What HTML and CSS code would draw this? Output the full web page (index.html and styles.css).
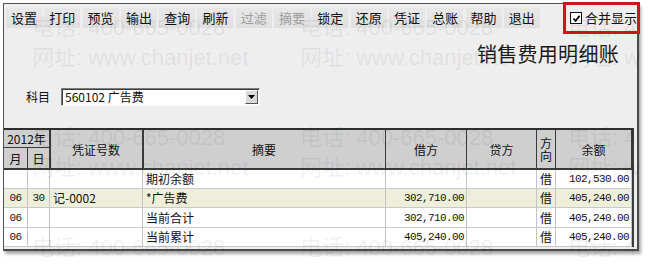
FILE: index.html
```html
<!DOCTYPE html>
<html lang="zh-CN">
<head>
<meta charset="utf-8">
<title>销售费用明细账</title>
<link rel="stylesheet" href="styles.css">
</head>
<body>
<div class="panel">
  <div class="toolbar">
    <span class="tb">设置</span>
    <span class="tb">打印</span>
    <span class="tb">预览</span>
    <span class="tb">输出</span>
    <span class="tb">查询</span>
    <span class="tb">刷新</span>
    <span class="tb disabled">过滤</span>
    <span class="tb disabled">摘要</span>
    <span class="tb">锁定</span>
    <span class="tb">还原</span>
    <span class="tb">凭证</span>
    <span class="tb">总账</span>
    <span class="tb">帮助</span>
    <span class="tb">退出</span>
  </div>
  <div class="title-row"><h1 class="title">销售费用明细账</h1></div>
  <div class="subject-row">
    <span class="subject-label">科目</span>
    <div class="select">
      <span class="select-text">560102 广告费</span>
      <span class="select-btn"><svg width="7" height="4" viewBox="0 0 7 4"><path d="M0 0H7L3.5 4Z" fill="#000"/></svg></span>
    </div>
  </div>
  <div class="ledger">
    <div class="h h-year">2012年</div>
    <div class="h h-voucher thick-l">凭证号数</div>
    <div class="h h-summary thick-l">摘要</div>
    <div class="h h-debit">借方</div>
    <div class="h h-credit">贷方</div>
    <div class="h h-dir">方<br>向</div>
    <div class="h h-bal">余额</div>
    <div class="h h-month">月</div>
    <div class="h h-day">日</div>

    <div class="c"></div><div class="c"></div><div class="c"></div>
    <div class="c txt">期初余额</div><div class="c"></div><div class="c"></div>
    <div class="c dir">借</div><div class="c num">102,530.00</div>

    <div class="c hl dt">06</div><div class="c hl dt">30</div><div class="c hl txt">记-0002</div>
    <div class="c hl txt">*广告费</div><div class="c hl num">302,710.00</div><div class="c hl"></div>
    <div class="c hl dir">借</div><div class="c hl num">405,240.00</div>

    <div class="c dt tall">06</div><div class="c tall"></div><div class="c tall"></div>
    <div class="c txt tall">当前合计</div><div class="c num tall">302,710.00</div><div class="c tall"></div>
    <div class="c dir tall">借</div><div class="c num tall">405,240.00</div>

    <div class="c dt">06</div><div class="c"></div><div class="c"></div>
    <div class="c txt">当前累计</div><div class="c num">405,240.00</div><div class="c"></div>
    <div class="c dir">借</div><div class="c num">405,240.00</div>
  </div>
</div>

<div class="merge-box">
  <span class="checkbox"><svg width="9" height="9" viewBox="0 0 9 9"><path d="M1.5 4.5L3.6 6.8L7.6 1.8" fill="none" stroke="#000" stroke-width="1.8"/></svg></span>
  <span class="merge-label">合并显示</span>
</div>

<div class="watermarks" aria-hidden="true">
  <span class="wm" style="left:32px;top:15px">电话: 400-665-0028</span>
  <span class="wm" style="left:300px;top:15px">电话: 400-665-0028</span>
  <span class="wm" style="left:568px;top:15px">电话: 4</span>
  <span class="wm" style="left:32px;top:45px">网址: www.chanjet.net</span>
  <span class="wm" style="left:300px;top:45px">网址: www.chanjet.net</span>
  <span class="wm" style="left:568px;top:45px">网址: w</span>
  <span class="wm" style="left:32px;top:125px">电话: 400-665-0028</span>
  <span class="wm" style="left:300px;top:125px">电话: 400-665-0028</span>
  <span class="wm" style="left:568px;top:125px">电话: 4</span>
  <span class="wm" style="left:32px;top:155px">网址: www.chanjet.net</span>
  <span class="wm" style="left:300px;top:155px">网址: www.chanjet.net</span>
  <span class="wm" style="left:568px;top:155px">网址: w</span>
  <span class="wm" style="left:32px;top:235px">电话: 400-665-0028</span>
  <span class="wm" style="left:300px;top:235px">电话: 400-665-0028</span>
  <span class="wm" style="left:568px;top:235px">电话: 4</span>
</div>
</body>
</html>
```

FILE: styles.css
```css
* { box-sizing: border-box; }

body {
  margin: 0;
  width: 648px;
  height: 264px;
  background: #ffffff;
  font-family: "Noto Sans CJK SC", "Liberation Sans", sans-serif;
  font-size: 12px;
  color: #111;
  position: relative;
  overflow: hidden;
}

.panel {
  margin: 3px 0 0 3px;
  width: 636px;
  height: 248px;
  border-top: 1px solid #555;
  border-left: 1px solid #555;
  border-right: 2px solid #4a4a4a;
  border-bottom: 2px solid #4a4a4a;
  background: #eeeeee;
  box-shadow: 2px 3px 3px rgba(0, 0, 0, 0.35);
  display: flex;
  flex-direction: column;
}

/* toolbar */
.toolbar {
  height: 28px;
  display: flex;
  align-items: center;
  gap: 2.3px;
  padding-left: 2px;
}

.tb {
  width: 36px;
  height: 20px;
  line-height: 20px;
  text-align: center;
  font-size: 13px;
  background: linear-gradient(#e8e8e8, #e0e0e0);
  color: #111;
}

.tb.disabled { color: #9c9c9c; }

/* title */
.title-row {
  margin-top: 10px;
  height: 24px;
  display: flex;
  justify-content: flex-end;
  padding-right: 18px;
}

.title {
  margin: 0;
  font-size: 20px;
  line-height: 24px;
  font-weight: normal;
  letter-spacing: 0.3px;
  color: #1a1a1a;
}

/* subject select */
.subject-row {
  margin-top: 22px;
  height: 18px;
  display: flex;
  align-items: center;
  padding-left: 22px;
}

.subject-label {
  font-size: 12px;
  line-height: 18px;
  width: 35px;
}

.select {
  width: 199px;
  height: 18px;
  background: #fff;
  border-top: 1px solid #7d7d7d;
  border-left: 1px solid #7d7d7d;
  border-right: 1px solid #f8f8f8;
  border-bottom: 1px solid #f8f8f8;
  box-shadow: inset 1px 1px 0 #3c3c3c;
  display: flex;
  align-items: center;
  justify-content: space-between;
  padding: 0 1px 0 3px;
}

.select-text {
  font-size: 12px;
  line-height: 16px;
}

.select-btn {
  width: 13px;
  height: 14px;
  background: #d9d9d9;
  border-top: 1px solid #fff;
  border-left: 1px solid #fff;
  border-right: 1px solid #555;
  border-bottom: 1px solid #555;
  display: flex;
  align-items: center;
  justify-content: center;
}

/* ledger grid */
.ledger {
  margin-top: 22px;
  width: 630px;
  display: grid;
  grid-template-columns: 24px 22px 93px 243px 81px 70px 19px 76px;
  grid-template-rows: 18px 22px 19px 19px 20px 19px;
  border-top: 2px solid #2e2e2e;
  border-right: 2px solid #3a3a3a;
}

.h {
  background: #cfcfcf;
  border-right: 1px solid #3a3a3a;
  border-bottom: 2px solid #3a3a3a;
  display: flex;
  align-items: center;
  justify-content: center;
  text-align: center;
  font-size: 12px;
  line-height: 13px;
  color: #111;
}

.h.thick-l { box-shadow: inset 1px 0 0 #3a3a3a; }

.h-year { grid-column: 1 / 3; grid-row: 1; border-bottom-width: 1px; font-size: 12px; }
.h-month { grid-column: 1; grid-row: 2; }
.h-day { grid-column: 2; grid-row: 2; }
.h-voucher { grid-column: 3; grid-row: 1 / 3; }
.h-summary { grid-column: 4; grid-row: 1 / 3; }
.h-debit { grid-column: 5; grid-row: 1 / 3; }
.h-credit { grid-column: 6; grid-row: 1 / 3; }
.h-dir { grid-column: 7; grid-row: 1 / 3; }
.h-bal { grid-column: 8; grid-row: 1 / 3; }

.c {
  background: #ffffff;
  border-right: 1px solid #c4c4c4;
  border-bottom: 1px solid #c8c8c8;
  display: flex;
  align-items: center;
  font-size: 12px;
  line-height: 14px;
  color: #111;
  white-space: nowrap;
}

.c.hl { background: #eeefda; }

.c.txt { padding-left: 3px; }

.c.dt {
  justify-content: center;
  font-family: "Liberation Mono", monospace;
  font-size: 11px;
  letter-spacing: -0.5px;
}

.c.dir { justify-content: center; }

.c.num {
  justify-content: flex-end;
  padding-right: 2px;
  font-family: "Liberation Mono", monospace;
  font-size: 11px;
  letter-spacing: -0.6px;
}

/* merge checkbox annotation */
.merge-box {
  position: absolute;
  left: 563px;
  top: 2px;
  width: 77px;
  height: 32px;
  border: 3px solid #d0141c;
  display: flex;
  align-items: center;
  padding-left: 4px;
  gap: 3px;
  background: #eeeeee;
  white-space: nowrap;
}

.checkbox {
  flex: none;
  width: 12px;
  height: 12px;
  border: 1.5px solid #111;
  background: #fff;
  display: flex;
  align-items: center;
  justify-content: center;
}

.merge-label {
  font-size: 13px;
  line-height: 16px;
  color: #111;
}

/* faint watermark text laid over the whole screenshot */
.watermarks {
  position: absolute;
  inset: 0;
  pointer-events: none;
  overflow: hidden;
}

.wm {
  position: absolute;
  white-space: nowrap;
  font-family: "Liberation Sans", "Noto Sans CJK SC", sans-serif;
  font-size: 22px;
  line-height: 26px;
  color: rgba(0, 0, 0, 0.07);
}
```
